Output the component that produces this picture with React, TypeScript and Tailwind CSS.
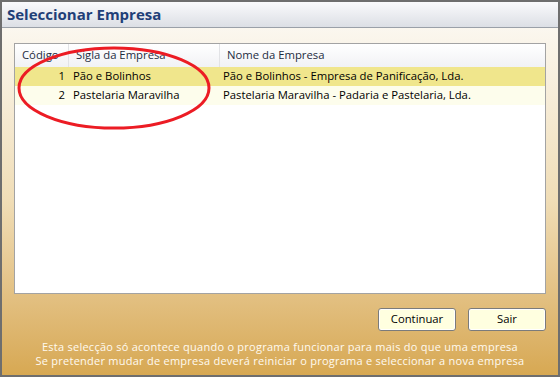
import React from 'react';

const rows = [
  { code: 1, sigla: 'Pão e Bolinhos', nome: 'Pão e Bolinhos - Empresa de Panificação, Lda.' },
  { code: 2, sigla: 'Pastelaria Maravilha', nome: 'Pastelaria Maravilha - Padaria e Pastelaria, Lda.' },
];

function App() {
  return (
    <div className="relative w-[560px] h-[377px] border-2 border-[#6e6e6e] flex flex-col overflow-hidden font-['Open_Sans',sans-serif] text-[11.3px] text-black">
      {/* Title bar */}
      <div className="h-[26px] shrink-0 bg-gradient-to-b from-[#fafafc] to-[#dcdfe5] border-b border-[#9aa0a8] flex items-center pl-[5px]">
        <span className="text-[15px] font-bold text-[#1f3f78] leading-none">Seleccionar Empresa</span>
      </div>

      {/* Body */}
      <div className="flex-1 flex flex-col bg-gradient-to-b from-[#fbf7ef] via-[#f0ddb6] to-[#d7a852] px-[12px] pt-[15px]">
        <div className="h-[251px] bg-white border border-[#a3a3a3] flex flex-col">
          <div className="h-[23px] flex bg-gradient-to-b from-white to-[#f1f2f5] text-[#1d2c3f]">
            <div className="w-[54px] border-r border-[#e2e3e6] pl-[7px] flex items-center">Código</div>
            <div className="w-[151px] border-r border-[#e2e3e6] pl-[7px] flex items-center">Sigla da Empresa</div>
            <div className="flex-1 pl-[7px] flex items-center">Nome da Empresa</div>
          </div>
          {rows.map((r, i) => (
            <div
              key={r.code}
              className={i === 0 ? 'h-[19px] flex items-center bg-[#f0e68c]' : 'h-[19px] flex items-center bg-[#fdfdec]'}
            >
              <div className="w-[50px] text-right">{r.code}</div>
              <div className="w-[155px] pl-[8px]">{r.sigla}</div>
              <div className="flex-1 pl-[3px]">{r.nome}</div>
            </div>
          ))}
        </div>

        <div className="flex justify-end gap-[12px] mt-[14px]">
          <button className="w-[78px] h-[23px] rounded-[3px] border border-[#7b7b7b] bg-[#ffffe0] shadow-[inset_0_0_0_1px_#ffffff]">
            Continuar
          </button>
          <button className="w-[78px] h-[23px] rounded-[3px] border border-[#7b7b7b] bg-[#ffffe0] shadow-[inset_0_0_0_1px_#ffffff]">
            Sair
          </button>
        </div>

        <div className="mt-[9px] text-center text-[11px] leading-[14px] text-[#fffaf0] tracking-[0.25px]">
          <div>Esta selecção só acontece quando o programa funcionar para mais do que uma empresa</div>
          <div>Se pretender mudar de empresa deverá reiniciar o programa e seleccionar a nova empresa</div>
        </div>
      </div>

      {/* red annotation ellipse */}
      <svg className="absolute left-0 top-0 pointer-events-none" width="560" height="377">
        <ellipse cx="112" cy="86" rx="95" ry="40" fill="none" stroke="#ec1c24" strokeWidth="3" />
      </svg>
    </div>
  );
}

export default App;
